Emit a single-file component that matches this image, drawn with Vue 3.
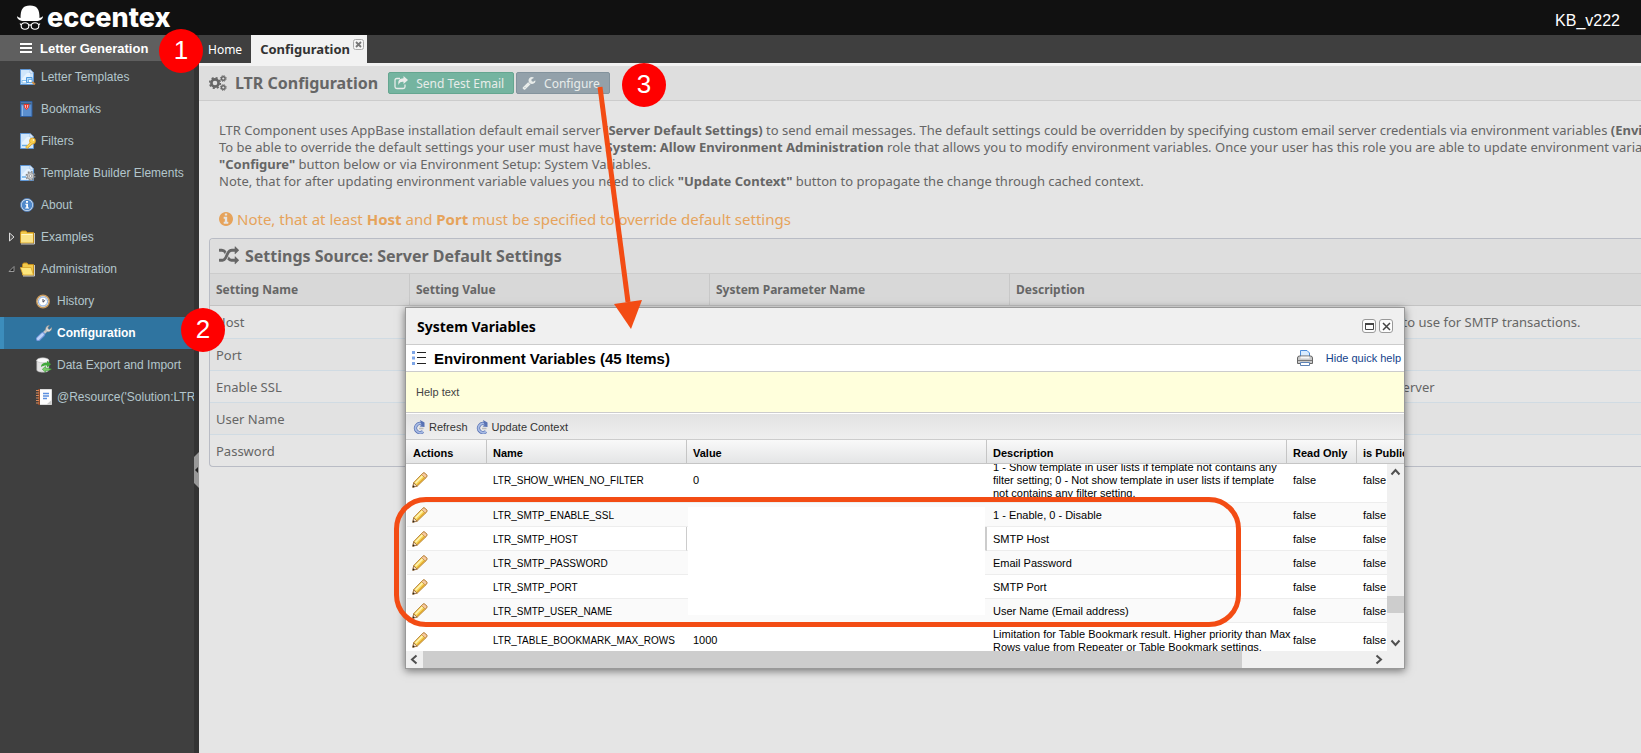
<script setup>
import { ref } from 'vue';

const navItems = ref([
  { label: 'Letter Templates', icon: 'template', level: 0 },
  { label: 'Bookmarks', icon: 'bookmark', level: 0 },
  { label: 'Filters', icon: 'filter', level: 0 },
  { label: 'Template Builder Elements', icon: 'builder', level: 0 },
  { label: 'About', icon: 'about', level: 0 },
  { label: 'Examples', icon: 'folder', level: 0, arrow: 'closed' },
  { label: 'Administration', icon: 'folder-open', level: 0, arrow: 'open' },
  { label: 'History', icon: 'history', level: 1 },
  { label: 'Configuration', icon: 'wrench', level: 1, active: true },
  { label: 'Data Export and Import', icon: 'data', level: 1 },
  { label: "@Resource('Solution:LTR", icon: 'notebook', level: 1 },
]);

const settings = ref([
  {
    name: 'Host',
    description: 'A String that contains the name or IP address of the email host to use for SMTP transactions.',
  },
  { name: 'Port', description: '' },
  { name: 'Enable SSL', description: 'Specifies whether the SmtpClient uses SSL to access the SMTP server' },
  { name: 'User Name', description: '' },
  { name: 'Password', description: '' },
]);

const variables = ref([
  {
    name: 'LTR_SHOW_WHEN_NO_FILTER',
    value: '0',
    description:
      '1 - Show template in user lists if template not contains any\nfilter setting; 0 - Not show template in user lists if template\nnot contains any filter setting.',
  },
  { name: 'LTR_SMTP_ENABLE_SSL', value: '', description: '1 - Enable, 0 - Disable' },
  { name: 'LTR_SMTP_HOST', value: '', description: 'SMTP Host', selected: true },
  { name: 'LTR_SMTP_PASSWORD', value: '', description: 'Email Password' },
  { name: 'LTR_SMTP_PORT', value: '', description: 'SMTP Port' },
  { name: 'LTR_SMTP_USER_NAME', value: '', description: 'User Name (Email address)' },
  {
    name: 'LTR_TABLE_BOOKMARK_MAX_ROWS',
    value: '1000',
    description: 'Limitation for Table Bookmark result. Higher priority than Max\nRows value from Repeater or Table Bookmark settings.',
  },
]);
</script>

<template>
  <div class="app">
    <header class="topbar">
      <a class="logo" href="#">
        <svg width="28" height="26" viewBox="0 0 28 26">
          <path d="M4.500 13 C4.500 4 7 .5 14 .5 C21 .5 23.500 4 23.500 13 Z" fill="#fff" />
          <path d="M1 11 C2 12.500 4 13 6 13 L22 13 C24 13 26 12.500 27 11 C27 14.500 24 16 20 16 L8 16 C4 16 1 14.500 1 11 Z" fill="#fff" />
          <g fill="none" stroke="#fff" stroke-width="1.100">
            <ellipse cx="9" cy="21" rx="3.800" ry="3.200" />
            <ellipse cx="19" cy="21" rx="3.800" ry="3.200" />
            <path d="M12.800 20.500 Q14 19 15.200 20.500 M5.200 20 L4 18.500 M22.800 20 L24 18.500" />
          </g>
        </svg>
        <span>eccentex</span>
      </a>
      <span class="user">KB_v222</span>
    </header>

    <div class="workspace">
      <aside class="sidebar">
        <div class="sidebar-title">
          <svg width="12" height="12" viewBox="0 0 12 12">
            <path d="M0 2h12M0 6h12M0 10h12" stroke="#fff" stroke-width="2" />
          </svg>
          <span>Letter Generation</span>
        </div>
        <nav>
          <a v-for="item in navItems" :key="item.label" href="#" class="nav-item"
            :class="{ nested: item.level === 1, active: item.active }">
            <svg v-if="item.arrow" class="nav-arrow" width="8" height="10" viewBox="0 0 8 10">
              <path v-if="item.arrow === 'closed'" d="M1.500 1v8l4.500-4z" fill="#555" stroke="#ddd" />
              <path v-else d="M6 2.500v5h-5z" fill="#222" stroke="#999" />
            </svg>
            <svg class="nav-icon" width="16" height="16" viewBox="0 0 16 16">
              <g v-if="['template', 'filter', 'builder'].includes(item.icon)">
                <path d="M.5 .5h9.500l3.500 3.500v11.500h-13z" fill="#cfe6fb" stroke="#5f97d6" />
                <path d="M10 .5v3.500h3.500z" fill="#fff" stroke="#86b4e4" stroke-width=".6" />
                <path d="M2 14.500v-5l5-5.500h3v10.500z" fill="#e6f3fe" />
                <g v-if="item.icon === 'template'">
                  <path d="M2 11.500h5v2.500h-5z" fill="#fff" stroke="#69aee6" stroke-width=".8" />
                  <path d="M6.500 8.500h5.500v5h-5.500z" fill="#b4dcfa" stroke="#4f9be0" />
                  <path d="M8.500 10.500h3.500v3h-3.500z" fill="#fff" stroke="#4f9be0" stroke-width=".7" />
                  <path d="M12.300 13l2.700 2.500" stroke="#c98a42" stroke-width="1.800" />
                </g>
                <g v-else-if="item.icon === 'filter'">
                  <path d="M2 12.500h5" stroke="#69aee6" stroke-width="1.500" />
                  <circle cx="12.500" cy="8" r="3" fill="#f7cf4e" stroke="#d99a1f" stroke-width=".8" />
                  <path d="M11.500 10l-5.200 5" stroke="#d99a1f" stroke-width="3" />
                  <path d="M11.500 9.800l-5 4.800" stroke="#f9d65e" stroke-width="1.600" />
                  <circle cx="13.500" cy="7" r=".8" fill="#fff" />
                </g>
                <g v-else>
                  <path d="M2 12h4" stroke="#69aee6" stroke-width="1.500" />
                  <circle cx="10.500" cy="11" r="4.200" fill="none" stroke="#888" stroke-width="1.600" stroke-dasharray="1.700 1.600" />
                  <circle cx="10.500" cy="11" r="3.300" fill="#d0d0d0" stroke="#888" stroke-width=".8" />
                  <circle cx="10.500" cy="11" r="1.300" fill="#fff" stroke="#777" stroke-width=".6" />
                </g>
              </g>
              <g v-else-if="item.icon === 'bookmark'">
                <path d="M.5 .5h11.500v15h-11.500z" fill="#5b8fcf" stroke="#2e5c9c" />
                <path d="M1 1.500h10.500v2h-10.500z" fill="#44607f" />
                <path d="M2.500 4.500v10.500" stroke="#8fb8e8" />
                <path d="M4 3.500h5l-.8 3.500-1.700 1.500-1.700-1.500z" fill="#fbb" stroke="#e8372a" />
                <path d="M6.500 4v3.500" stroke="#e8372a" />
              </g>
              <g v-else-if="item.icon === 'about'">
                <circle cx="7" cy="8" r="6.500" fill="#dbe8f5" stroke="#4b76ae" />
                <circle cx="7" cy="8" r="5.300" fill="#5089cb" />
                <path d="M6 4h2v1.700h-2zM5.300 6.800h2.700v3.700h1v1h-3.800v-1h1v-2.700h-.9z" fill="#fff" />
              </g>
              <g v-else-if="item.icon === 'folder'">
                <path d="M.5 14v-10.500l1-1.500h4.500l1.200 1.500h6.300v10.500z" fill="#f2c94b" stroke="#c48f1c" />
                <path d="M1 13.500v-8.500h12v8.500z" fill="#fbe489" />
                <path d="M1.500 5.500h11" stroke="#fff6c7" />
                <path d="M1 15h13.500v-11" stroke="#eee" stroke-width=".8" fill="none" />
              </g>
              <g v-else-if="item.icon === 'folder-open'">
                <path d="M2.500 14v-10.500l1-1.500h3.500l1.200 1.500h5.300v10.500z" fill="#f2c94b" stroke="#c48f1c" />
                <path d="M.3 6.500h10.700l2.500 7.500h-10.500z" fill="#fde67c" stroke="#d5a32c" stroke-width=".8" />
                <path d="M3 15h11.500v-11" stroke="#eee" stroke-width=".8" fill="none" />
              </g>
              <g v-else-if="item.icon === 'history'">
                <circle cx="7" cy="8.500" r="6.200" fill="#f4f9fd" stroke="#c79a5e" stroke-width="1.500" />
                <circle cx="7" cy="8.500" r="4.500" fill="#fff" stroke="#7ea6da" />
                <path d="M7 6v3.200l2.200-2" stroke="#445" fill="none" />
              </g>
              <g v-else-if="item.icon === 'wrench'">
                <path d="M7 9l5-5" stroke="#c5c5c5" stroke-width="2.600" />
                <path d="M10 5.500c-1-2.600.8-4.900 3.300-5l-1.600 2.300.6 1.300 1.400.3 2-1.900c.4 2.900-2.200 5-4.700 4z" fill="#ddd" stroke="#9a8f85" stroke-width=".6" />
                <path d="M2.200 14l4.600-4.500" stroke="#6e93d8" stroke-width="4.600" stroke-linecap="round" />
                <path d="M2.200 13.700l4.300-4.200" stroke="#bcd2f8" stroke-width="2.800" stroke-linecap="round" />
              </g>
              <g v-else-if="item.icon === 'data'">
                <path d="M.8 3v10c0 3 12 3 12 0v-10z" fill="#e3e3e3" stroke="#aaa" stroke-width=".6" />
                <ellipse cx="6.800" cy="3.300" rx="6" ry="2.500" fill="#fafafa" stroke="#bbb" stroke-width=".6" />
                <path d="M5 10c0-3.500 3-4.500 6-4.300v-2l4 3.500-4 3.300v-2c-2.500-.2-4 .3-6 1.500z" fill="#42a83c" />
                <path d="M15.500 12c-1.500 1.500-4 1.800-6 1.500v1.800l-3.200-3 3.200-3v1.700c2 .4 4 .5 6 1z" fill="#7dd06a" stroke="#2f8f2c" stroke-width=".5" />
              </g>
              <g v-else>
                <path d="M3.500.5h12v15h-12z" fill="#fdfdfd" stroke="#ddd" />
                <path d="M3 0v16" stroke="#8b4a2b" stroke-width="2" />
                <path d="M0 1.500h3M0 4h3M0 6.500h3M0 9h3M0 11.500h3M0 14h3" stroke="#d98a5c" />
                <path d="M7 4.500h6M7 7h6M7 9.500h4" stroke="#5b8fe0" stroke-width="1.400" />
                <path d="M15.500 11v4.500h-5z" fill="#ccc" />
              </g>
            </svg>
            <span>{{ item.label }}</span>
          </a>
        </nav>
      </aside>
      <div class="splitter">
        <button class="collapse" aria-label="Collapse menu">
          <svg width="5" height="36" viewBox="0 0 5 36">
            <path d="M0 5l5-5v36l-5-5z" fill="#999" />
            <path d="M1 18l3-3v6z" fill="#222" />
          </svg>
        </button>
      </div>

      <main class="main">
        <div class="tabs">
          <a href="#" class="tab">Home</a>
          <a href="#" class="tab current">
            Configuration
            <svg width="11" height="11" viewBox="0 0 11 11">
              <rect x=".5" y=".5" width="10" height="10" rx="2" fill="#f5f5f5" stroke="#aaa" />
              <path d="M3 3l5 5M8 3l-5 5" stroke="#777" stroke-width="1.800" />
            </svg>
          </a>
        </div>

        <div class="page-bar">
          <svg width="18" height="16" viewBox="0 0 18 16" fill="none" stroke="#666">
            <circle cx="6" cy="8" r="3.600" stroke-width="2.600" />
            <circle cx="6" cy="8" r="5.300" stroke-width="1.600" stroke-dasharray="2.100 2.062" />
            <circle cx="14.300" cy="3.500" r="1.800" stroke-width="1.400" />
            <circle cx="14.300" cy="3.500" r="2.900" stroke-width="1" stroke-dasharray="1.200 1.077" />
            <circle cx="14.300" cy="12.500" r="1.800" stroke-width="1.400" />
            <circle cx="14.300" cy="12.500" r="2.900" stroke-width="1" stroke-dasharray="1.200 1.077" />
          </svg>
          <h1>LTR Configuration</h1>
          <button class="btn green">
            <svg width="14" height="14" viewBox="0 0 14 14">
              <path d="M6 2.500h-3.200q-1.800 0-1.800 1.800v6.400q0 1.800 1.800 1.800h6.400q1.800 0 1.800-1.800v-2.200" fill="none" stroke="#e8ecea" stroke-width="1.300" />
              <path d="M9.500 0l4.500 4-4.500 4v-2.300c-3 0-4.300.6-4.700 3.600-1.500-4.500.7-6.800 4.700-7z" fill="#e8ecea" />
            </svg>
            Send Test Email
          </button>
          <button class="btn gray">
            <svg width="14" height="14" viewBox="0 0 1792 1792">
              <path fill="#e8ecea"
                d="M448 1472q0-26-19-45t-45-19-45 19-19 45 19 45 45 19 45-19 19-45zm644-420l-682 682q-37 37-90 37-52 0-91-37l-106-108q-38-36-38-90 0-53 38-91l681-681q39 98 114.500 173.500t173.500 114.500zm634-435q0 39-23 106-47 134-164.500 217.500t-258.500 83.500q-185 0-316.500-131.500t-131.500-316.500 131.500-316.500 316.500-131.500q58 0 121.500 16.500t107.500 46.500q16 11 16 28t-16 28l-293 169v224l193 107q5-3 79-48.500t135.500-81 70.500-35.500q15 0 23.500 10t8.500 25z" />
            </svg>
            Configure
          </button>
        </div>

        <p class="intro">
          LTR Component uses AppBase installation default email server <b>(Server Default Settings)</b> to send email messages. The default settings could be overridden by specifying custom email server credentials via environment variables <b>(Environment</b><br>
          To be able to override the default settings your user must have <b>System: Allow Environment Administration</b> role that allows you to modify environment variables. Once your user has this role you are able to update environment variables<br>
          <b>"Configure"</b> button below or via Environment Setup: System Variables.<br>
          Note, that for after updating environment variable values you need to click <b>"Update Context"</b> button to propagate the change through cached context.
        </p>

        <p class="note">
          <svg width="14" height="14" viewBox="128 128 1536 1536">
            <path fill="#e6a35b"
              d="M1152 1376v-160q0-14-9-23t-23-9h-96v-512q0-14-9-23t-23-9h-320q-14 0-23 9t-9 23v160q0 14 9 23t23 9h96v320h-96q-14 0-23 9t-9 23v160q0 14 9 23t23 9h448q14 0 23-9t9-23zm-128-896v-160q0-14-9-23t-23-9h-192q-14 0-23 9t-9 23v160q0 14 9 23t23 9h192q14 0 23-9t9-23zm640 416q0 209-103 385.500t-279.500 279.500-385.500 103-385.500-103-279.500-279.500-103-385.500 103-385.500 279.500-279.500 385.500-103 385.500 103 279.500 279.500 103 385.500z" />
          </svg>
          <span>Note, that at least <b>Host</b> and <b>Port</b> must be specified to override default settings</span>
        </p>

        <section class="panel">
          <h2>
            <svg width="20" height="20" viewBox="0 0 1792 1792">
              <path fill="#666"
                d="M666 481q-60 92-137 273-22-45-37-72.500t-40.500-63.500-51-56.500-63-35-81.500-14.500h-224q-14 0-23-9t-9-23v-192q0-14 9-23t23-9h224q250 0 410 225zm1126 799q0 14-9 23l-320 320q-9 9-23 9-13 0-22.500-9.500t-9.500-22.500v-192q-32 0-85 .5t-81 1-73-1-71-5-64-10.500-63-18.500-58-28.500-59-40-55-53.500-56-69.500q59-93 136-273 22 45 37 72.500t40.500 63.500 51 56.500 63 35 81.500 14.500h256v-192q0-14 9-23t23-9q12 0 24 10l319 319q9 9 9 23zm0-896q0 14-9 23l-320 320q-9 9-23 9-13 0-22.500-9.500t-9.500-22.500v-192h-256q-48 0-87 15t-69 45-51 61.500-45 77.500q-32 62-78 171-29 66-49.500 111t-54 105-64 100-74 83-90 68.500-106.500 42-128 16.500h-224q-14 0-23-9t-9-23v-192q0-14 9-23t23-9h224q48 0 87-15t69-45 51-61.500 45-77.500q32-62 78-171 29-66 49.500-111t54-105 64-100 74-83 90-68.500 106.500-42 128-16.500h256v-192q0-14 9-23t23-9q12 0 24 10l319 319q9 9 9 23z" />
            </svg>
            Settings Source: Server Default Settings
          </h2>
          <table class="settings">
            <colgroup>
              <col class="w200">
              <col class="w300">
              <col class="w300">
              <col>
            </colgroup>
            <thead>
              <tr>
                <th>Setting Name</th>
                <th>Setting Value</th>
                <th>System Parameter Name</th>
                <th>Description</th>
              </tr>
            </thead>
            <tbody>
              <tr v-for="row in settings" :key="row.name">
                <td>{{ row.name }}</td>
                <td></td>
                <td></td>
                <td>{{ row.description }}</td>
              </tr>
            </tbody>
          </table>
        </section>
      </main>
    </div>

    <section class="dialog" role="dialog" aria-label="System Variables">
      <div class="dialog-head">
        <h2>System Variables</h2>
        <button class="tool" aria-label="Maximize">
          <svg width="9" height="7" viewBox="0 0 9 7">
            <path d="M.5 1h8v5.500h-8z" fill="none" stroke="#444" />
            <path d="M0 1h9" stroke="#444" stroke-width="2" />
          </svg>
        </button>
        <button class="tool" aria-label="Close">
          <svg width="9" height="9" viewBox="0 0 9 9">
            <path d="M1 1l7 7M8 1l-7 7" stroke="#444" stroke-width="1.500" />
          </svg>
        </button>
      </div>
      <div class="dialog-title">
        <svg width="14" height="14" viewBox="0 0 14 14">
          <path d="M0 0h3v3h-3zM0 5.500h3v3h-3zM0 11h3v3h-3z" fill="#7ea6e8" />
          <path d="M5 1.500h9M5 6.500h9M5 12.500h9" stroke="#222" />
        </svg>
        <h3>Environment Variables (45 Items)</h3>
        <svg width="16" height="16" viewBox="0 0 16 16">
          <path d="M3.500 7v-6.500h6.500l2.500 2.500v4z" fill="#d9ecff" stroke="#4f8fdc" />
          <path d="M.5 8q0-2 2-2h11q2 0 2 2v5.500h-15z" fill="#c9c9c9" stroke="#666" />
          <path d="M3.500 7.500h9" stroke="#f7f7f7" stroke-width="2" />
          <path d="M1 10.500h14" stroke="#777" />
          <path d="M3.500 12.500h9v3h-9z" fill="#fff" stroke="#5d82b5" />
        </svg>
        <a href="#">Hide quick help</a>
      </div>
      <div class="help">Help text</div>
      <div class="toolbar">
        <button v-for="label in ['Refresh', 'Update Context']" :key="label">
          <svg width="12" height="14" viewBox="0 0 12 14">
            <path d="M10 11.500a4.500 4.500 0 1 1-1-7.500" fill="none" stroke="#5872b4" stroke-width="3.200" />
            <path d="M10 11.500a4.500 4.500 0 1 1-1-7.500" fill="none" stroke="#a9bce4" stroke-width="1.800" />
            <path d="M7 0l4.500 2.500v4.500l-5-.5 2-1.500z" fill="#5872b4" />
            <path d="M6 8.500h4.500" stroke="#bbb" stroke-width="1.500" />
          </svg>
          {{ label }}
        </button>
      </div>
      <div class="grid-head">
        <table class="grid">
          <colgroup>
            <col class="w80">
            <col class="w200">
            <col class="w300">
            <col class="w300">
            <col class="w70">
            <col class="w70">
          </colgroup>
          <thead>
            <tr>
              <th>Actions</th>
              <th>Name</th>
              <th>Value</th>
              <th>Description</th>
              <th>Read Only</th>
              <th>is Public</th>
            </tr>
          </thead>
        </table>
      </div>
      <div class="grid-body">
        <div class="grid-view">
          <table class="grid rows">
            <colgroup>
              <col class="w80">
              <col class="w200">
              <col class="w300">
              <col class="w300">
              <col class="w70">
              <col class="w70">
            </colgroup>
            <tbody>
              <tr v-for="row in variables" :key="row.name" :class="{ selected: row.selected }">
                <td>
                  <svg width="16" height="16" viewBox="0 0 16 16">
                    <path d="M.8 15.200l1-4.700 8.700-9 1.500-.8 3 2.500-.3 1.800-9 8.700z" fill="#f9d95f" stroke="#b5803a" />
                    <path d="M10.300 1.700l1.700-1 3 2.500-.4 1.600-1.500 1.200-3.600-3.500z" fill="#f6c9a0" stroke="#b5803a" stroke-width=".7" />
                    <path d="M3.500 11l7-7" stroke="#fff5b8" stroke-width="1.500" />
                    <path d="M5.300 12.800l7-7" stroke="#e0a52c" stroke-width="1.200" />
                    <path d="M1.700 10.800l3.600 3.400-4.500 1z" fill="#f3dcc0" stroke="#8a5a2a" stroke-width=".7" />
                    <path d="M1.200 13.300l1.600 1.500-2.200.6z" fill="#222" />
                  </svg>
                </td>
                <td>{{ row.name }}</td>
                <td>{{ row.value }}</td>
                <td>{{ row.description }}</td>
                <td>false</td>
                <td>false</td>
              </tr>
            </tbody>
          </table>
          <div class="blank"></div>
        </div>
        <div class="vscroll">
          <svg width="17" height="17" viewBox="0 0 17 17"><path d="M4.500 10.500l4-4.500 4 4.500" fill="none" stroke="#505050" stroke-width="2" /></svg>
          <div class="vthumb"></div>
          <svg width="17" height="17" viewBox="0 0 17 17"><path d="M4.500 6.500l4 4.500 4-4.500" fill="none" stroke="#505050" stroke-width="2" /></svg>
        </div>
      </div>
      <div class="hscroll">
        <svg width="17" height="17" viewBox="0 0 17 17"><path d="M10.500 4.500l-4.500 4 4.500 4" fill="none" stroke="#505050" stroke-width="2" /></svg>
        <div class="hthumb"></div>
        <svg width="17" height="17" viewBox="0 0 17 17"><path d="M6.500 4.500l4.500 4-4.500 4" fill="none" stroke="#505050" stroke-width="2" /></svg>
      </div>
    </section>

    <div class="frame"></div>
    <svg class="pointer" width="60" height="250" viewBox="0 0 60 250">
      <path d="M15 7L43 222" stroke="#f34c14" stroke-width="5" />
      <path d="M29 224L57 220L46 249z" fill="#f34c14" />
    </svg>
    <span class="step one">1</span>
    <span class="step two">2</span>
    <span class="step three">3</span>
  </div>
</template>

<style>
body {
  margin: 0;
}
</style>

<style scoped>
* {
  box-sizing: border-box;
}

h1,
h2,
h3,
p {
  margin: 0;
}

a {
  text-decoration: none;
}

button {
  border: none;
  padding: 0;
  background: none;
  font-family: inherit;
}

svg {
  flex: none;
  display: block;
}

table {
  border-collapse: separate;
  border-spacing: 0;
  table-layout: fixed;
}

th {
  text-align: left;
}

.w70 { width: 70px; }
.w80 { width: 80px; }
.w200 { width: 200px; }
.w300 { width: 300px; }

.app {
  position: relative;
  display: flex;
  flex-direction: column;
  min-height: 100vh;
  overflow: hidden;
  font-family: 'Noto Sans', Tahoma, sans-serif;
  color: #666;
  background: #e5e5e5;
}

.topbar {
  display: flex;
  align-items: center;
  justify-content: space-between;
  height: 35px;
  padding: 0 21px 0 16px;
  background: #111;
  font-family: 'Liberation Sans', Arial, sans-serif;
  color: #fff;
}

.logo {
  display: flex;
  align-items: center;
  gap: 3px;
  color: #fff;
  font: 800 27px/32px Inter, sans-serif;
}

.user {
  padding-top: 6px;
  font-size: 16px;
}

.workspace {
  display: flex;
  flex: 1;
}

.sidebar {
  flex: none;
  width: 194px;
  overflow: hidden;
  background: #3f3f3f;
  font-family: 'Liberation Sans', Arial, sans-serif;
}

.sidebar-title {
  display: flex;
  align-items: center;
  gap: 8px;
  height: 26px;
  padding-left: 20px;
  background: #5f5f5f;
  color: #fff;
  font-size: 13px;
  font-weight: bold;
}

.nav-item {
  position: relative;
  display: flex;
  align-items: center;
  gap: 5px;
  height: 32px;
  padding-left: 20px;
  color: #b3c6cc;
  font-size: 12px;
  white-space: nowrap;
}

.nav-item.nested {
  padding-left: 36px;
}

.nav-item.active {
  padding-left: 32px;
  border-left: 4px solid #3c8dbc;
  background: #2f74a0;
  color: #fff;
  font-weight: bold;
}

.nav-arrow {
  position: absolute;
  left: 8px;
}

.splitter {
  display: flex;
  align-items: flex-start;
  flex: none;
  width: 5px;
  padding-top: 417px;
  background: #333;
}

.main {
  flex: 1;
  min-width: 0;
  overflow: hidden;
}

.tabs {
  display: flex;
  height: 31px;
  border-bottom: 3px solid #f2f2f2;
  background: #3f3f3f;
  font-size: 12px;
}

.tab {
  display: flex;
  align-items: center;
  padding: 0 9px;
  color: #fff;
}

.tab.current {
  gap: 3px;
  padding-right: 3px;
  background: #f2f2f2;
  color: #333;
  font-size: 13px;
  font-weight: bold;
}

.tab.current svg {
  margin-bottom: 10px;
}

.page-bar {
  display: flex;
  align-items: center;
  gap: 2px;
  height: 35px;
  padding-left: 10px;
  border-bottom: 1px solid #ccc;
  background: #dedede;
}

.page-bar h1 {
  padding: 0 8px 0 6px;
  font-size: 16px;
}

.btn {
  display: flex;
  align-items: center;
  gap: 8px;
  height: 22px;
  padding: 0 9px 0 5px;
  border-radius: 2px;
  font-size: 12px;
  color: #e8ecea;
}

.btn.green {
  border: 1px solid #64a690;
  background: #74b4a0;
}

.btn.gray {
  border: 1px solid #83939d;
  background: #93a1aa;
}

.intro {
  padding: 21px 0 0 20px;
  font-size: 13px;
  line-height: 17px;
  white-space: nowrap;
}

.note {
  display: flex;
  align-items: center;
  gap: 4px;
  padding: 18px 20px 8px;
  color: #e6a35b;
  font-size: 15px;
  line-height: 22px;
}

.panel {
  margin-left: 10px;
  border: 1px solid #b9bcc5;
  border-right: none;
  border-radius: 4px 0 0 4px;
  overflow: hidden;
}

.panel h2 {
  display: flex;
  align-items: center;
  gap: 6px;
  height: 35px;
  padding-left: 9px;
  border-bottom: 1px solid #ccc;
  background: #dedede;
  font-size: 16px;
}

.settings {
  width: 100%;
}

.settings th {
  height: 32px;
  padding: 0 6px;
  border-right: 1px solid #c8c8c8;
  border-bottom: 1px solid #c3c3c3;
  background: #d8d8d8;
  font-size: 12px;
}

.settings th:last-child {
  border-right: none;
}

.settings td {
  height: 32px;
  padding: 0 6px;
  border-bottom: 1px solid #d0dbe3;
  font-size: 13px;
  white-space: nowrap;
}

.settings tr:nth-child(even) td {
  background: #e2e2e2;
}

.settings tbody tr:first-child td {
  height: 33px;
}

.settings tr:last-child td {
  height: 31px;
  border-bottom: none;
}

.dialog {
  position: absolute;
  left: 405px;
  top: 307px;
  width: 1000px;
  border: 1px solid #999;
  background: #fff;
  box-shadow: 0 2px 8px rgba(0, 0, 0, 0.5);
  font-family: 'Liberation Sans', Arial, sans-serif;
  font-size: 11px;
  color: #000;
}

.dialog-head {
  display: flex;
  align-items: center;
  gap: 3px;
  height: 37px;
  padding: 0 11px;
  border-bottom: 1px solid #ccc;
  background: #f0f0f0;
}

.dialog-head h2 {
  flex: 1;
  font-family: 'Noto Sans', Tahoma, sans-serif;
  font-size: 14px;
}

.tool {
  display: flex;
  align-items: center;
  justify-content: center;
  width: 14px;
  height: 14px;
  border: 1px solid #999;
  border-radius: 3px;
  background: #fcfcfc;
}

.dialog-title {
  display: flex;
  align-items: center;
  height: 27px;
  padding: 0 3px 0 6px;
  border-bottom: 1px solid #ccc;
}

.dialog-title h3 {
  flex: 1;
  padding-left: 8px;
  font-size: 15px;
}

.dialog-title a {
  padding-left: 13px;
  color: #15428b;
}

.help {
  height: 41px;
  padding-left: 10px;
  border-bottom: 1px solid #ccc;
  background: #ffffdc;
  color: #444;
  line-height: 40px;
}

.toolbar {
  display: flex;
  align-items: center;
  gap: 8px;
  height: 27px;
  padding-left: 7px;
  border-top: 1px solid #fff;
  border-bottom: 1px solid #ccc;
  background: linear-gradient(#e2e2e2, #efefef);
}

.toolbar button {
  display: flex;
  align-items: center;
  gap: 4px;
  font-size: 11px;
  color: #333;
}

.grid-head {
  height: 24px;
  overflow: hidden;
  border-bottom: 1px solid #c5c5c5;
  background: linear-gradient(#f9f9f9, #e4e5e6);
}

.grid {
  width: 1020px;
  margin-left: 1px;
}

.grid th {
  height: 24px;
  padding: 2px 6px 0;
  border-right: 1px solid #c5c5c5;
}

.grid-body {
  display: flex;
  height: 187px;
}

.grid-view {
  position: relative;
  flex: 1;
  min-width: 0;
  overflow: hidden;
}

/* the list is scrolled part of the way down its first visible row */
.rows {
  margin-top: -7px;
}

.rows td {
  height: 24px;
  padding: 3px 0 2px 6px;
  border-bottom: 1px solid #ededed;
  line-height: 13px;
  white-space: pre;
}

.rows td:first-child {
  padding: 0 5px;
}

.rows td:nth-child(2) {
  font-size: 10px;
}

.rows tr:nth-child(even) td {
  background: #fafafa;
}

.rows tr.selected td:nth-child(2) {
  border-right: 1px solid #ccc;
}

.rows tr.selected td:nth-child(3) {
  border-right: 2px solid #ccc;
}

.rows tr:first-child td {
  height: 46px;
}

.rows tr:last-child td {
  height: 35px;
}

/* covers the private values */
.blank {
  position: absolute;
  left: 282px;
  top: 43px;
  width: 297px;
  height: 108px;
  background: #fff;
}

.vscroll {
  display: flex;
  flex-direction: column;
  width: 17px;
  background: #f0f0f0;
}

.vthumb {
  height: 17px;
  margin: auto 0 21px;
  background: #cdcdcd;
}

.hscroll {
  display: flex;
  height: 17px;
  padding-right: 17px;
  background: #f0f0f0;
}

.hthumb {
  width: 819px;
  margin-right: auto;
  background: #cdcdcd;
}

.frame {
  position: absolute;
  left: 394px;
  top: 497px;
  width: 847px;
  height: 130px;
  border: 5px solid #f34c14;
  border-radius: 32px;
}

.pointer {
  position: absolute;
  left: 585px;
  top: 80px;
}

.step {
  position: absolute;
  width: 44px;
  height: 44px;
  border-radius: 50%;
  background: #f00;
  color: #fff;
  font: 26px/42px 'Liberation Sans', Arial, sans-serif;
  text-align: center;
}

.one {
  left: 159px;
  top: 29px;
}

.two {
  left: 181px;
  top: 308px;
}

.three {
  left: 622px;
  top: 63px;
}
</style>
